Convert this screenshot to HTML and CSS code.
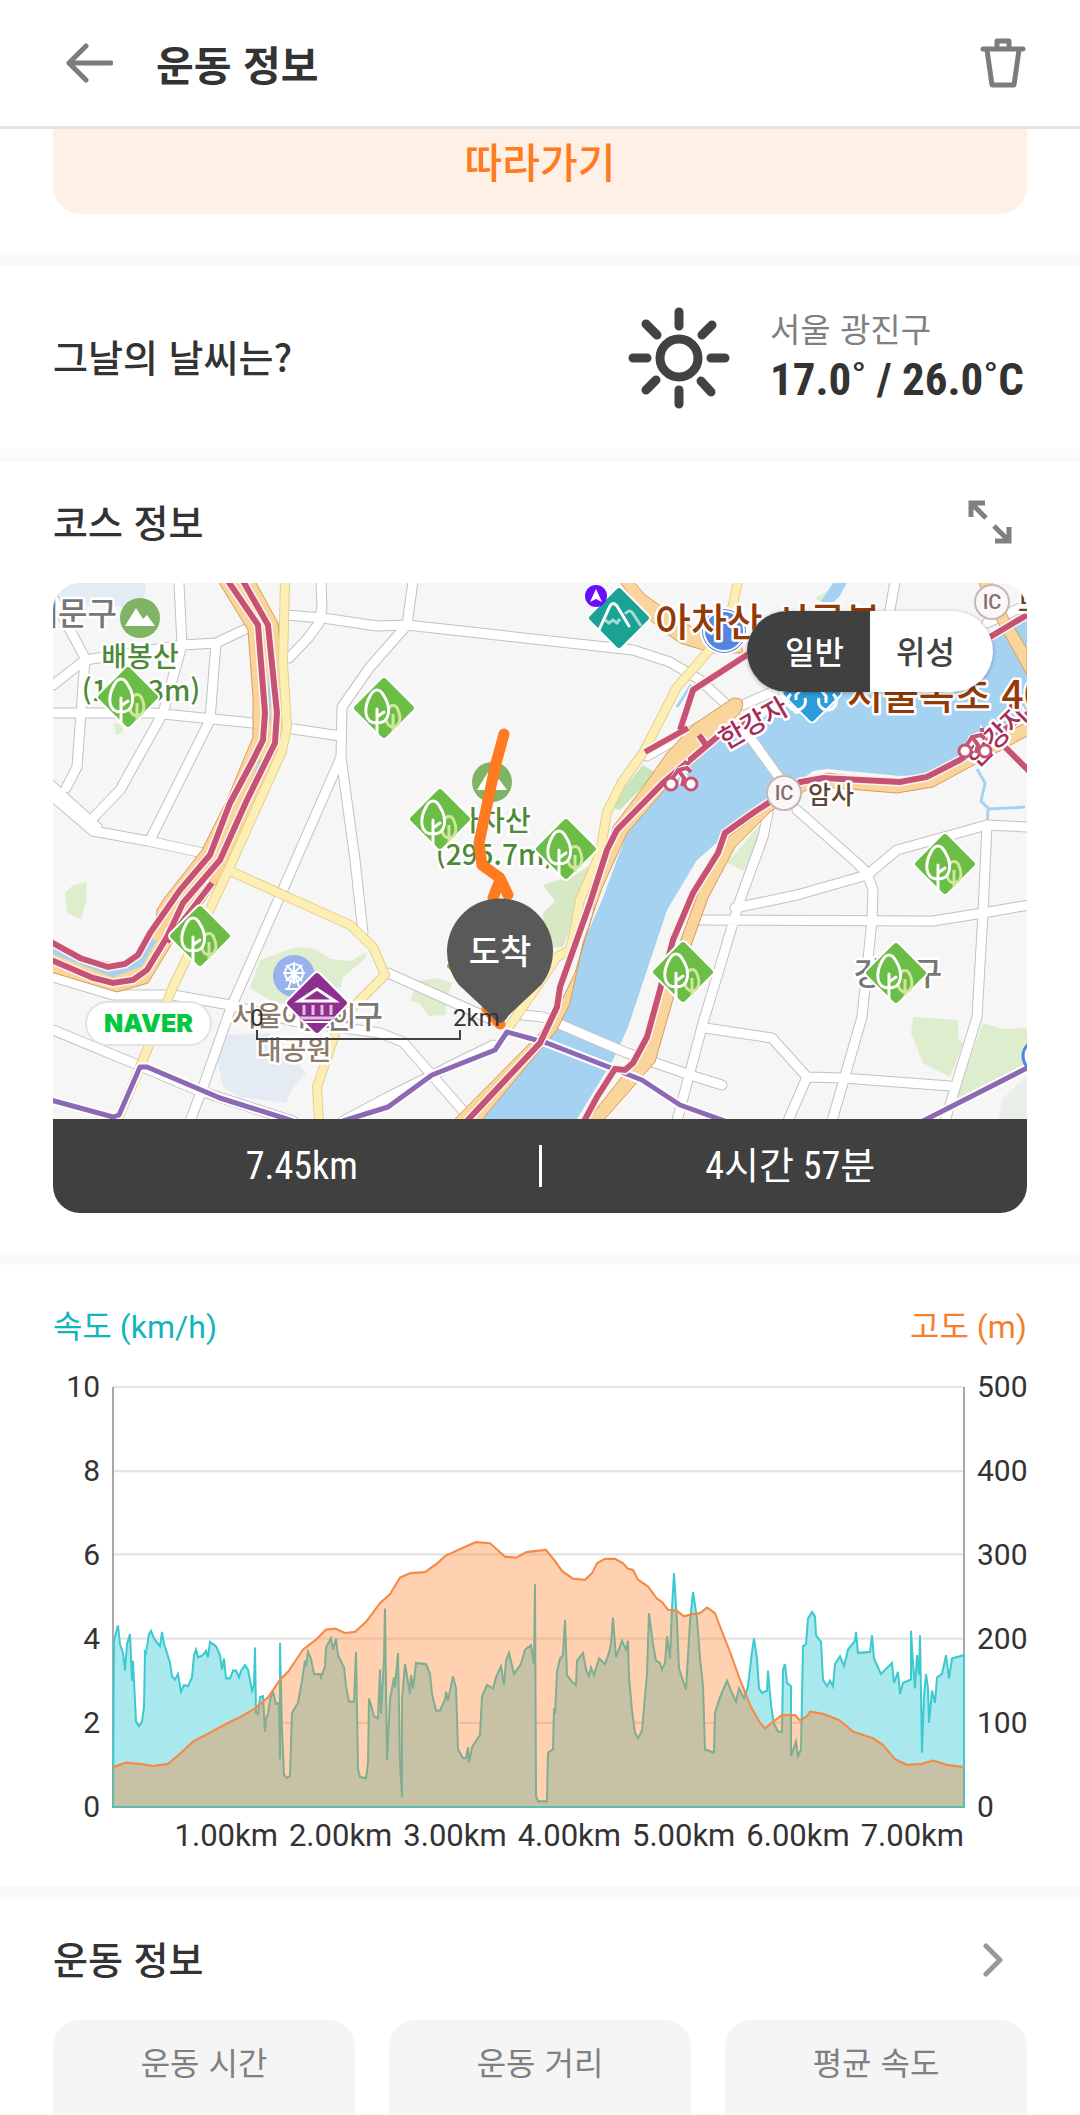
FILE: index.html
```html
<!DOCTYPE html>
<html lang="ko">

<head>
    <meta charset="UTF-8">
    <meta name="viewport" content="width=device-width, initial-scale=1.0">
    <title>운동 정보</title>
    <link rel="stylesheet" href="styles.css">
</head>

<body>
    <header class="header">
        <button class="icon-btn" type="button" aria-label="뒤로">
            <svg width="48" height="40" viewBox="0 0 48 40" fill="none" stroke="#7c7c7c" stroke-width="5" stroke-linecap="round" stroke-linejoin="round">
                <path d="M21 3L4 20L21 37M4 20H46" />
            </svg>
        </button>
        <h1>운동 정보</h1>
        <button class="icon-btn" type="button" aria-label="삭제">
            <svg width="46" height="50" viewBox="0 0 46 50" fill="none" stroke="#7c7c7c" stroke-width="5" stroke-linejoin="round">
                <path d="M3 11H43" stroke-linecap="round" />
                <path d="M17 10V3H29V10" />
                <path d="M7 12L12 47H34L39 12" />
            </svg>
        </button>
    </header>

    <main>
        <section class="follow">
            <button class="follow-btn" type="button">따라가기</button>
        </section>

        <section class="weather">
            <h2>그날의 날씨는?</h2>
            <svg width="102" height="102" viewBox="-51 -51 102 102" fill="none" stroke="#424242" stroke-width="9" stroke-linecap="round">
                <circle r="19" />
                <path d="M0-46V-32M0 46V32M-46 0H-32M46 0H32M-33-34L-22-23M33-33L23-23M-33 32L-23 22M32 34L22 23" />
            </svg>
            <div class="weather-info">
                <p class="place">서울 광진구</p>
                <p class="temp">17.0˚ / 26.0˚C</p>
            </div>
        </section>

        <section class="course">
            <div class="section-title">
                <h2>코스 정보</h2>
                <button class="icon-btn" type="button" aria-label="지도 크게 보기">
                    <svg width="46" height="46" viewBox="0 0 46 46" fill="none" stroke="#808080" stroke-width="5">
                        <path d="M3 17V3H17M3 3L18 18M41 27V41H27M41 41L26 26" />
                        <path d="M1 1H13L1 13ZM43 43H31L43 31Z" fill="#808080" stroke="none" />
                    </svg>
                </button>
            </div>
            <div class="map-card">
                <div class="map">
                    <svg class="map-view" viewBox="0 0 974 536">
                        <defs>
                            <g id="roads">
                                <path d="M-8 0L32 75M0 102L32 77L130 62L163 60L195 45M126 0L129 62L110 130L67 207L38 237M163 60L157 137L97 257M32 75L28 130L24 184L13 205M0 130L100 130L200 140L287 153" />
                                <path d="M-2 202L44 244M-2 212L40 248L95 258L150 270" />
                                <path d="M268 0L269 25L266 40L255 55L236 75M233 32L270 35L324 43L354 42L580 67L617 79L647 97L674 122L697 154L730 200" />
                                <path d="M744 227L770 250L804 280L814 290L820 307L819 337L809 434L779 538" />
                                <path d="M360 -2L354 42L317 84L289 124L288 174L224 320L179 422L150 504L137 538M288 174L302 277L310 350" />
                                <path d="M0 394L60 412L120 412L177 422L240 438L327 450L350 459L412 530M0 447L80 480L144 507L240 538M335 390L440 437" />
                                <path d="M470 432L490 434L574 470L637 492L669 502" />
                                <path d="M715 230L710 254L687 317L650 440L624 538M682 325L744 312L814 292L844 267L934 242L976 244M645 337L880 338L930 330L976 322" />
                                <path d="M934 242L930 330L924 434L892 538M652 445L719 455L754 494L790 495L897 503M754 494L735 538M842 -2L837 27M934 40L974 22M594 173L660 136M690 122L730 104M440 462L335 514L290 538" />
                            </g>
                            <g id="local-roads">
                                <path d="M232 -2L230 80L234 144L229 168L176 286L120 404L87 484L64 538" />
                                <path d="M177 288L297 342L320 364L332 392L287 437L264 504L266 538" />
                                <path d="M685 -2L676 40L654 70L624 104L590 170L569 199L554 229L547 270L527 317L522 345L517 367L504 374L454 447" />
                            </g>
                            <g id="bike-roads">
                                <path d="M175 -2L205 42L212 130L210 157L199 179L177 220L157 272L127 307L97 350L85 372L72 381L55 384L27 375L-2 359" />
                                <path d="M190 -2L215 42L224 130L222 160L194 217L167 277L130 320L114 354L94 387L80 397L60 400L40 395L-2 377M159 300L114 359" />
                                <path d="M697 137L664 154L610 200L564 247L554 267L537 320L507 404L504 424L487 460L412 540M592 169L635 145M627 147L640 107L697 70M646 152L653 162M937 54L974 32" />
                                <path d="M976 130L907 177L874 194L847 199L770 195L747 199L700 230L672 250L665 270L640 310L620 357L607 407L594 454L580 480L572 487L562 486L544 514L530 540M952 164L976 188" />
                            </g>
                            <g id="subway">
                                <path d="M-2 517L60 534L66 532L87 484L94 484L167 515L240 538M290 538L335 524L379 492L442 467L454 449L494 460L589 497L627 522L672 538M870 538L974 485" />
                            </g>
                            <g id="tree">
                                <rect x="-23" y="-23" width="46" height="46" rx="4" transform="rotate(45)" fill="#6cbd45" stroke="#fff" stroke-width="2" />
                                <path d="M9 19C1 18 1 9 4 2C6-4 12-4 14 2C17 9 17 18 9 19M9 23V6" fill="none" stroke="#cfe69b" stroke-width="3" />
                                <path d="M-7 15C-21 15-20-1-14-12C-10-20-4-20 0-12C7-1 7 15-7 15ZM-7 27V1M-7 9L0 4" fill="#6cbd45" stroke="#fff" stroke-width="3" stroke-linecap="round" />
                            </g>
                            <g id="peak">
                                <circle r="20" fill="#7eb463" />
                                <path d="M-15 8L-4-10L3 1L7-3L15 8Z" fill="#fff" />
                            </g>
                            <g id="bike" fill="none" stroke="#c75374" stroke-width="3">
                                <path d="M-9 6L-3-5L5-8L9-4M-3-5L3 1L1 9M5-14h2" stroke="#fff" stroke-width="7" />
                                <circle cx="-10" cy="8" r="6" fill="#fff" />
                                <circle cx="10" cy="8" r="6" fill="#fff" />
                                <path d="M-9 3L-3-6L6-8L10-4M-2-5L3 2L1 10M5-13h4" stroke-width="4" />
                            </g>
                        </defs>

                        <rect width="974" height="536" fill="#f6f6f6" />

                        <!-- parks and blocks -->
                        <g fill="#deedce">
                            <path d="M12 310L20 302L34 299L33 318L28 336L14 330Z" />
                            <path d="M61 140L70 142L69 150L63 152Z" />
                            <path d="M197 405L207 377L227 370L243 364L262 366L277 376L298 378L314 369L312 376L290 394L288 404L262 410L225 422Z" />
                            <path d="M590 182L603 190L567 227L555 224Z" fill="#c7e6bb" />
                            <path d="M545 277L522 292L490 302L502 318L490 330L490 365L510 364L530 310Z" fill="#d7e8c4" />
                            <path d="M365 398L384 395L399 400L395 412L392 432L376 433L366 420L357 418Z" />
                            <path d="M708 240L706 255L691 288L674 280Z" />
                            <path d="M860 434L905 437L905 455L910 460L897 494L870 480L858 450Z" />
                            <path d="M930 440L950 446L974 445L974 482L901 517Z" />
                            <path d="M762 15L785 2L778 25Z" />
                        </g>
                        <path d="M974 493L950 515L945 536H974Z" fill="#eaeee8" />
                        <path d="M0 0H93L91 16L85 24L30 22L0 12Z" fill="#e3ebf3" />
                        <path d="M174 452L217 450L253 490L240 504L233 520L187 514L170 504L164 477Z" fill="#e4ebf3" />

                        <!-- river -->
                        <path d="M549 317L574 250L614 204L660 160L744 117L797 85L937 57L974 30V137L914 174L874 192L847 193L774 186L760 188L744 200L714 217L687 240L667 257L644 277L614 327L575 444L560 477L524 536H427L487 467L504 447L517 420L530 360Z" fill="#a6d2f2" />
                        <path d="M780 0H794L786 14L772 27H762Z" fill="#a6d2f2" />
                        <path d="M924 186L932 200L928 218L936 226L972 224M935 226L934 242M638 102L624 124" fill="none" stroke="#a6d2f2" stroke-width="3" />

                        <use href="#roads" fill="none" stroke="#c2c2c2" stroke-width="11" stroke-linecap="round" stroke-linejoin="round" />
                        <use href="#roads" fill="none" stroke="#fff" stroke-width="9" stroke-linecap="round" stroke-linejoin="round" />

                        <!-- expressways -->
                        <g fill="#f9d59b" stroke="#dc9a55">
                            <path d="M165 -2L195 47L200 114L200 154L174 217L149 267L110 317L104 327L103 340L88 368L64 381L-2 368V389L64 409L95 400L118 362L150 320L178 280L200 227L227 167L234 134L225 40L202 -2Z" />
                            <path d="M680 115L640 142L614 170L590 204L560 244L546 290L540 330L522 390L505 425L485 452L400 538H428L487 467L504 447L517 420L530 360L549 305L574 250L614 204L660 162L688 128Q694 114 680 115Z" />
                            <path d="M976 138L874 192L847 199L774 190L744 202L674 255L650 297L634 340L612 400L596 454L572 490L534 538H550L602 479L624 402L655 315L682 264L718 228L760 203L844 210L880 204L976 152Z" />
                            <path d="M566 -2L590 30L606 45L627 60L660 70L690 70L688 62L640 45L612 26L592 12L580 -2Z" />
                            <path d="M925 -2L942 34L974 92V66L955 34L938 -2Z" />
                        </g>
                        <path d="M217 80L216 140M208 177L185 235L170 262" fill="none" stroke="#a9cfe6" stroke-width="3" />
                        <path d="M-2 366L60 390L86 380L100 356" fill="none" stroke="#a6d2f2" stroke-width="8" />

                        <use href="#local-roads" fill="none" stroke="#e3cf8f" stroke-width="10" stroke-linejoin="round" />
                        <use href="#local-roads" fill="none" stroke="#fdefb4" stroke-width="8" stroke-linejoin="round" />
                        <use href="#subway" fill="none" stroke="#fff" stroke-width="9" stroke-linejoin="round" />
                        <use href="#subway" fill="none" stroke="#8c68b5" stroke-width="5" stroke-linejoin="round" />
                        <use href="#bike-roads" fill="none" stroke="#fdf3ee" stroke-width="9" />
                        <use href="#bike-roads" fill="none" stroke="#c75374" stroke-width="6" />

                        <!-- place marks -->
                        <use href="#peak" x="87" y="35" />
                        <use href="#peak" x="439" y="199" />
                        <circle cx="671" cy="48" r="23" fill="#5484e0" stroke="#fff" stroke-width="2" />
                        <circle cx="671" cy="48" r="20" fill="none" stroke="#fff" stroke-width="2" />
                        <circle cx="986" cy="473" r="16" fill="#fff" stroke="#5484e0" stroke-width="3" />
                        <circle cx="986" cy="473" r="11" fill="#5484e0" />
                        <circle cx="241" cy="393" r="21" fill="#98b2ee" />
                        <g fill="none" stroke="#fff" stroke-width="2">
                            <circle cx="241" cy="390" r="9" />
                            <path d="M241 379V401M230 390H252M233 382L249 398M249 382L233 398M241 390L235 406M241 390L247 406M232 406H250" />
                        </g>

                        <g class="label">
                            <text class="district" x="64" y="42" text-anchor="end">대문구</text>
                            <text class="mount" x="87" y="84" text-anchor="middle">배봉산</text>
                            <text class="mount" x="88" y="118" text-anchor="middle">(108.3m)</text>
                            <text class="mount" x="439" y="248" text-anchor="middle">아차산</text>
                            <text class="mount" x="442" y="282" text-anchor="middle">(295.7m)</text>
                            <text class="bike-name" transform="translate(673 167) rotate(-30)">한강자전거</text>
                            <text class="bike-name" transform="translate(924 186) rotate(-45)">한강자</text>
                            <text class="ic-name" x="755" y="221">암사</text>
                            <text class="ic-name" x="965" y="28">보</text>
                            <text class="district" x="330" y="445" text-anchor="end">광진구</text>
                            <text class="park" x="241" y="443" text-anchor="middle">서울어린이</text>
                            <text class="park" x="241" y="477" text-anchor="middle">대공원</text>
                            <text class="district" x="845" y="402" text-anchor="middle">강동구</text>
                            <text class="cert" x="602" y="53">아차산 시루봉</text>
                            <text class="cert" x="794" y="126">서울속초 400</text>
                        </g>
                        <use href="#bike" x="628" y="193" />
                        <use href="#bike" x="922" y="160" />
                        <g class="ic">
                            <circle cx="731" cy="210" r="17" />
                            <text x="731" y="217" text-anchor="middle">IC</text>
                            <circle cx="939" cy="19" r="17" />
                            <text x="939" y="26" text-anchor="middle">IC</text>
                        </g>

                        <use href="#tree" x="75" y="114" />
                        <use href="#tree" x="331" y="125" />
                        <use href="#tree" x="387" y="236" />
                        <use href="#tree" x="513" y="266" />
                        <use href="#tree" x="892" y="281" />
                        <use href="#tree" x="147" y="353" />
                        <use href="#tree" x="424" y="383" />
                        <use href="#tree" x="630" y="389" />
                        <use href="#tree" x="843" y="390" />

                        <g transform="translate(566 35)">
                            <rect x="-23" y="-23" width="46" height="46" rx="4" transform="rotate(45)" fill="#1aa394" stroke="#fff" stroke-width="2" />
                            <path d="M-14 2L-10 5L-6 2L-2 5L1 1M6-4C10-9 13-7 15-3L22 8" fill="none" stroke="#a6dbd2" stroke-width="3" />
                            <path d="M-20 12L-9-12Q-6-17-2-12L10 8" fill="none" stroke="#fff" stroke-width="3" stroke-linecap="round" />
                        </g>
                        <circle cx="543" cy="13" r="11" fill="#6a0dff" />
                        <path d="M543 6L549 19L543 16L537 19Z" fill="#fff" />
                        <g transform="translate(759 110)">
                            <rect x="-22" y="-22" width="44" height="44" rx="4" transform="rotate(45)" fill="#2b9dda" stroke="#fff" stroke-width="2" />
                            <path d="M-21 1a9 9 0 1 0 14 4M7 5a9 9 0 1 0 14-4M-16 7V2L-8-6M14 10V3L6-6" fill="none" stroke="#fff" stroke-width="3" />
                        </g>
                        <g transform="translate(264 420)">
                            <rect x="-23" y="-23" width="46" height="46" rx="4" transform="rotate(45)" fill="#8e2f8f" stroke="#fff" stroke-width="2" />
                            <path d="M-18-2L0-14L18-2Z" fill="none" stroke="#fff" stroke-width="3" />
                            <path d="M-13 2V12M-4 2V12M5 2V12M14 2V12M-18 15H18" fill="none" stroke="#dfbfe2" stroke-width="3" />
                            <path d="M-14 19H14" stroke="#fff" stroke-width="2" />
                        </g>

                        <!-- tracked route -->
                        <path d="M451 151L442 184L426 260L429 282L447 295L455 312M447 297L440 315M447 441L434 426" fill="none" stroke="#ff7a20" stroke-width="11" stroke-linecap="round" stroke-linejoin="round" />
                        <path d="M447 440Q443 440 438 432L406 402A53 53 0 1 1 488 402L456 432Q451 440 447 440Z" fill="#595959" />
                        <text class="pin-text" x="447" y="381" text-anchor="middle">도착</text>

                        <path d="M204 447V456H407V447" fill="none" stroke="#424242" stroke-width="2" />
                        <text class="scale" x="204" y="443" text-anchor="middle">0</text>
                        <text class="scale" x="400" y="443">2km</text>
                    </svg>
                    <span class="naver">NAVER</span>
                    <div class="map-type">
                        <button class="active" type="button">일반</button>
                        <button type="button">위성</button>
                    </div>
                </div>
                <div class="course-summary">
                    <span>7.45km</span>
                    <span>4시간 57분</span>
                </div>
            </div>
        </section>

        <section class="graph">
            <div class="legend">
                <span class="speed">속도 (km/h)</span>
                <span class="altitude">고도 (m)</span>
            </div>
            <div class="chart">
                <div class="axis axis-left">
                    <span>10</span><span>8</span><span>6</span><span>4</span><span>2</span><span>0</span>
                </div>
                <svg class="plot" viewBox="0 0 851 379" preserveAspectRatio="none">
                    <path d="M0 0H851M0 76H851M0 151H851M0 227H851M0 303H851M0 378H851" stroke="#e3e3e3" stroke-width="2" />
                    <path d="M0 0V379M851 0V379" stroke="#a8a8a8" stroke-width="2" />
                    <path class="speed-area" d="M0 379L1 229L5 215L7 232L10 240L12 256L14 232L17 223L19 265L20 247L23 302L26 306L29 302L31 289L32 239L33 240L36 223L38 220L41 227L47 234L49 221L51 232L53 237L57 249L59 261L62 264L65 259L68 275L71 269L75 270L79 262L81 242L83 237L85 244L90 242L93 238L95 244L97 230L103 234L107 242L109 255L111 245L113 263L117 263L120 256L123 256L126 262L128 256L132 251L135 255L139 274L141 269L142 235L143 294L145 295L147 280L150 279L152 311L153 299L155 295L157 282L160 275L163 286L166 285L167 336L167 231L169 309L171 350L174 353L177 351L179 294L185 285L189 265L192 247L193 252L195 239L198 245L201 259L207 259L208 262L212 252L213 235L218 227L220 237L223 227L225 242L231 253L233 270L236 284L241 284L243 239L245 345L247 352L253 353L255 339L256 281L258 287L261 297L265 299L267 255L268 295L271 245L272 200L274 337L277 282L281 262L282 271L285 240L287 339L289 370L289 282L292 250L297 277L298 260L300 272L303 249L313 250L317 259L319 277L323 292L327 292L332 282L333 275L335 283L340 261L343 272L345 327L350 335L353 335L355 325L356 339L359 325L367 314L369 279L374 269L380 272L383 262L388 252L391 269L393 247L396 240L401 259L408 250L412 237L418 233L421 250L422 178L423 369L425 374L434 374L435 330L440 327L441 290L442 295L444 257L447 245L450 242L452 210L454 260L459 266L463 269L464 247L470 240L473 255L476 261L478 253L481 260L486 245L492 250L496 240L498 232L500 208L503 244L509 229L513 237L515 229L516 262L519 292L522 312L525 317L529 310L534 259L536 204L540 232L543 247L547 249L549 255L552 249L554 225L557 245L559 199L561 168L564 212L566 254L570 265L573 273L577 212L580 185L584 209L587 245L590 270L592 327L601 330L602 294L607 280L614 265L619 276L623 284L626 272L631 281L635 270L639 239L641 227L644 245L646 272L649 276L654 274L655 256L658 287L661 304L665 311L669 311L670 255L672 250L674 267L678 270L678 333L683 320L685 333L688 327L690 234L693 232L695 209L699 203L702 207L703 224L708 230L710 264L714 270L717 265L720 270L722 250L727 243L731 252L735 237L742 229L743 221L745 240L757 239L759 224L761 245L768 259L779 249L781 267L785 257L787 277L790 267L798 264L798 220L800 249L802 272L804 242L806 260L807 224L809 330L811 279L813 259L815 272L816 303L819 274L822 285L824 262L829 259L833 242L836 263L839 245L851 242V379Z" />
                    <path class="altitude-area" d="M0 343L13 339L27 340L40 342L55 340L67 331L80 320L97 312L113 304L127 298L142 290L155 280L167 264L175 257L190 237L203 228L213 219L222 218L232 222L242 221L253 212L267 195L277 187L287 172L297 168L312 167L323 160L333 152L350 145L363 140L377 141L392 153L403 154L413 149L433 147L442 157L449 166L460 173L472 174L479 168L484 159L492 155L502 155L510 159L515 164L520 165L525 174L535 180L544 191L549 194L555 201L564 202L571 207L579 205L587 204L594 199L602 204L607 216L617 239L627 264L637 287L647 303L652 308L660 302L669 296L682 296L687 301L694 297L697 293L710 295L727 301L740 311L760 317L770 323L782 336L794 341L809 340L820 337L834 341L851 343V379H0Z" />
                    <path class="altitude-line" d="M0 343L13 339L27 340L40 342L55 340L67 331L80 320L97 312L113 304L127 298L142 290L155 280L167 264L175 257L190 237L203 228L213 219L222 218L232 222L242 221L253 212L267 195L277 187L287 172L297 168L312 167L323 160L333 152L350 145L363 140L377 141L392 153L403 154L413 149L433 147L442 157L449 166L460 173L472 174L479 168L484 159L492 155L502 155L510 159L515 164L520 165L525 174L535 180L544 191L549 194L555 201L564 202L571 207L579 205L587 204L594 199L602 204L607 216L617 239L627 264L637 287L647 303L652 308L660 302L669 296L682 296L687 301L694 297L697 293L710 295L727 301L740 311L760 317L770 323L782 336L794 341L809 340L820 337L834 341L851 343" />
                </svg>
                <div class="axis axis-right">
                    <span>500</span><span>400</span><span>300</span><span>200</span><span>100</span><span>0</span>
                </div>
            </div>
            <div class="axis-bottom">
                <span>1.00km</span><span>2.00km</span><span>3.00km</span><span>4.00km</span><span>5.00km</span><span>6.00km</span><span>7.00km</span>
            </div>
        </section>

        <section class="workout">
            <div class="section-title">
                <h2>운동 정보</h2>
                <button class="icon-btn" type="button" aria-label="더보기">
                    <svg width="46" height="34" viewBox="0 0 46 34" fill="none" stroke="#999" stroke-width="5" stroke-linecap="round" stroke-linejoin="round">
                        <path d="M18 3L32 17L18 31" />
                    </svg>
                </button>
            </div>
            <div class="cards">
                <div class="card">운동 시간</div>
                <div class="card">운동 거리</div>
                <div class="card">평균 속도</div>
            </div>
        </section>
    </main>
</body>

</html>
```

FILE: styles.css
```css
* {
    box-sizing: border-box;
}

body {
    margin: 0;
    height: 100vh;
    display: flex;
    flex-direction: column;
    overflow: hidden;
    background-color: #fff;
    color: #333;
    font-family: "Noto Sans CJK KR", sans-serif;
}

h1,
h2,
p {
    margin: 0;
}

button {
    border: none;
    padding: 0;
    background: none;
    font-family: inherit;
    cursor: pointer;
}

svg {
    display: block;
}

main {
    flex: 1;
    min-height: 0;
    overflow: hidden;
}

.header {
    display: flex;
    align-items: center;
    height: 129px;
    padding: 0 54px 0 65px;
    border-bottom: 3px solid #e3e3e3;
    flex-shrink: 0;
}

.header h1 {
    flex: 1;
    margin-left: 43px;
    font-size: 41px;
    font-weight: 700;
    line-height: 60px;
}

section {
    padding: 0 53px;
    border-bottom: 13px solid #fafafa;
}

h2 {
    padding-bottom: 4px;
    font-size: 38px;
    font-weight: 500;
    line-height: 56px;
}

.follow {
    padding-bottom: 39px;
}

.follow-btn {
    display: block;
    width: 100%;
    height: 85px;
    padding-bottom: 24px;
    border-radius: 0 0 27px 27px;
    background-color: #fff0e6;
    color: #ff7a20;
    font-size: 41px;
    font-weight: 500;
    line-height: 60px;
}

/* weather */
.weather {
    display: flex;
    align-items: center;
    height: 196px;
}

.weather h2 {
    flex: 1;
}

.weather-info {
    width: 257px;
    margin-left: 40px;
}

.place {
    color: #808080;
    font-size: 33px;
    line-height: 44px;
}

.temp {
    font-family: "Roboto Condensed", "Noto Sans CJK KR", sans-serif;
    font-size: 45px;
    font-weight: 700;
    line-height: 60px;
    white-space: nowrap;
}

/* course map */
.section-title {
    display: flex;
    justify-content: space-between;
    align-items: center;
    height: 121px;
    padding-right: 13px;
}

.course {
    padding-bottom: 39px;
}

.map-card {
    border-radius: 27px;
    overflow: hidden;
}

.map {
    position: relative;
}

.map-view {
    width: 100%;
    height: auto;
}

.label text {
    paint-order: stroke;
    stroke: #fff;
    stroke-width: 5px;
    stroke-linejoin: round;
    font-weight: 500;
    font-size: 27px;
}

.label .district {
    fill: #777;
    font-size: 32px;
}

.label .mount {
    fill: #4c8a37;
    font-size: 28px;
}

.label .bike-name {
    fill: #a52d58;
    font-size: 27px;
}

.label .ic-name {
    fill: #5d4636;
    font-size: 25px;
}

.label .park {
    fill: #8c7a6c;
}

.label .cert {
    fill: #943a09;
    font-size: 39px;
}

.ic circle {
    fill: #faf7f6;
    stroke: #c4b8b4;
    stroke-width: 2px;
}

.ic text {
    fill: #85706a;
    font-family: Roboto, sans-serif;
    font-size: 20px;
    font-weight: 500;
}

.pin-text {
    fill: #fff;
    font-size: 34px;
    font-weight: 500;
}

.scale {
    fill: #333;
    font-family: Roboto, sans-serif;
    font-size: 24px;
}

.naver {
    position: absolute;
    left: 34px;
    bottom: 75px;
    width: 123px;
    border-radius: 21px;
    background-color: #fff;
    box-shadow: 0 0 0 2px #e3e3e3;
    color: #03c73c;
    font-family: Inter, sans-serif;
    font-size: 25px;
    font-weight: 900;
    line-height: 41px;
    text-align: center;
}

.map-type {
    position: absolute;
    top: 28px;
    right: 34px;
    display: flex;
    width: 246px;
    height: 81px;
    border-radius: 41px;
    overflow: hidden;
    background-color: #fff;
    box-shadow: 0 1px 4px rgba(0, 0, 0, 0.3);
}

.map-type button {
    flex: 1;
    padding: 0 12px 4px;
    color: #424242;
    font-size: 32px;
    font-weight: 500;
}

.map-type .active {
    padding-left: 24px;
    background-color: #404040;
    color: #fff;
}

.map-type button:last-child {
    padding-right: 24px;
}

.course-summary {
    display: flex;
    align-items: center;
    height: 94px;
    background-color: #404040;
    color: #fff;
    font-family: "Roboto Condensed", "Noto Sans CJK KR", sans-serif;
    font-size: 38px;
}

.course-summary span {
    flex: 1;
    padding-left: 12px;
    line-height: 42px;
    text-align: center;
}

.course-summary span+span {
    border-left: 3px solid #fff;
}

/* chart */
.graph {
    padding-bottom: 32px;
}

.legend {
    display: flex;
    justify-content: space-between;
    padding-top: 36px;
    font-family: Roboto, "Noto Sans CJK KR", sans-serif;
    font-size: 32px;
    line-height: 52px;
}

.speed {
    color: #13b5bc;
}

.altitude {
    color: #f57f31;
}

.chart {
    display: flex;
    align-items: center;
    margin-top: 16px;
    font-family: Roboto, sans-serif;
    font-size: 30px;
    line-height: 36px;
}

.axis {
    display: flex;
    flex-direction: column;
    justify-content: space-between;
    height: 456px;
}

.axis-left {
    width: 60px;
    padding-right: 13px;
    text-align: right;
}

.axis-right {
    width: 63px;
    padding-left: 13px;
}

.plot {
    flex: 1;
    min-width: 0;
    height: 420px;
    overflow: visible;
}

.speed-area {
    fill: #a9e9ed;
    stroke: #3cc9cf;
    stroke-width: 2px;
}

.altitude-area {
    fill: #ff7a20;
    fill-opacity: 0.35;
}

.altitude-line {
    fill: none;
    stroke: #f58a48;
    stroke-width: 2px;
    stroke-linejoin: round;
}

.axis-bottom {
    display: flex;
    justify-content: flex-end;
    gap: 11px;
    margin-top: -7px;
    padding-right: 63px;
    font-family: Roboto, sans-serif;
    font-size: 31px;
    line-height: 36px;
}

/* workout */
.workout {
    border-bottom: none;
}

.cards {
    display: grid;
    grid-template-columns: repeat(3, 1fr);
    gap: 34px;
}

.card {
    height: 190px;
    padding-top: 17px;
    border-radius: 27px;
    background-color: #f5f5f5;
    color: #808080;
    font-size: 32px;
    line-height: 48px;
    text-align: center;
}
```
